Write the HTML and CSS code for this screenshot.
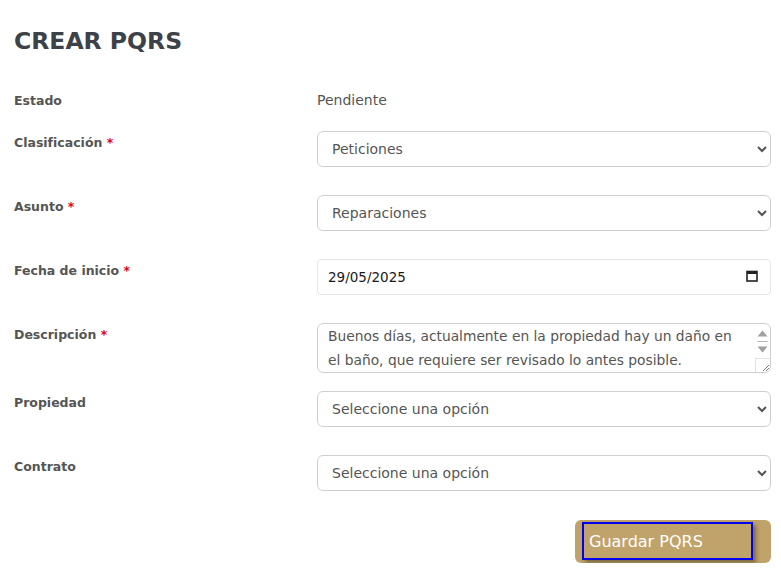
FILE: index.html
```html
<!DOCTYPE html>
<html lang="es">
<head>
    <meta charset="UTF-8">
    <meta name="viewport" content="width=device-width, initial-scale=1.0">
    <title>Crear PQRS</title>
    <link rel="stylesheet" href="styles.css">
</head>
<body>

<div class="container">
    <h2>CREAR PQRS</h2>
    <form id="pqrs-form">
        <div class="row row-static">
            <label>Estado</label>
            <div class="static">Pendiente</div>
        </div>
        <div class="row">
            <label for="clasificacion">Clasificación <span class="req">*</span></label>
            <select id="clasificacion">
                <option>Peticiones</option>
                <option>Quejas</option>
                <option>Reclamos</option>
                <option>Sugerencias</option>
            </select>
        </div>
        <div class="row">
            <label for="asunto">Asunto <span class="req">*</span></label>
            <select id="asunto">
                <option>Reparaciones</option>
                <option>Pagos</option>
                <option>Otros</option>
            </select>
        </div>
        <div class="row">
            <label for="fecha">Fecha de inicio <span class="req">*</span></label>
            <div class="date-field">
                <input type="text" id="fecha" value="29/05/2025">
                <svg class="cal" width="12" height="12" viewBox="0 0 12 12">
                    <rect x="1" y="1.5" width="10" height="9.5" fill="none" stroke="#222" stroke-width="1.6"/>
                    <rect x="1" y="1.5" width="10" height="2.5" fill="#222"/>
                </svg>
            </div>
        </div>
        <div class="row row-text">
            <label for="descripcion">Descripción <span class="req">*</span></label>
            <div class="text-field">
                <textarea id="descripcion">Buenos días, actualmente en la propiedad hay un daño en el baño, que requiere ser revisado lo antes posible.</textarea>
                <div class="fake-scroll">
                    <svg class="arrows" width="15" height="34" viewBox="0 0 15 34">
                        <path d="M2.5 12.5 L7.5 6.5 L12.5 12.5 Z" fill="#a0a0a0"/>
                        <line x1="2.5" y1="17.5" x2="12.5" y2="17.5" stroke="#b5b5b5" stroke-width="1"/>
                        <path d="M2.5 22.5 L12.5 22.5 L7.5 28.5 Z" fill="#a0a0a0"/>
                    </svg>
                    <div class="grip">
                        <svg width="10" height="10" viewBox="0 0 10 10">
                            <line x1="3" y1="9" x2="9" y2="3" stroke="#777" stroke-width="1"/>
                            <line x1="6" y1="9" x2="9" y2="6" stroke="#777" stroke-width="1"/>
                        </svg>
                    </div>
                </div>
            </div>
        </div>
        <div class="row">
            <label for="propiedad">Propiedad</label>
            <select id="propiedad">
                <option>Seleccione una opción</option>
            </select>
        </div>
        <div class="row">
            <label for="contrato">Contrato</label>
            <select id="contrato">
                <option>Seleccione una opción</option>
            </select>
        </div>
        <div class="actions">
            <div class="btn-wrap">
                <button type="button" id="save-btn">Guardar PQRS</button>
            </div>
        </div>
    </form>
</div>

</body>
</html>
```

FILE: styles.css
```css
body {
    font-family: "DejaVu Sans", sans-serif;
    background-color: #ffffff;
    margin: 0;
}
.container {
    padding: 26px 10px 0 14px;
}
h2 {
    margin: 0 0 33px 0;
    font-size: 23.5px;
    line-height: 30px;
    font-weight: bold;
    color: #3d4148;
}
.row {
    display: grid;
    grid-template-columns: 303px 1fr;
    align-items: start;
    margin-bottom: 28px;
}
.row-static {
    margin-bottom: 20px;
}
.row-text {
    margin-bottom: 18px;
}
label {
    font-size: 12.5px;
    line-height: 20px;
    padding-top: 2px;
    font-weight: bold;
    color: #555555;
}
.req {
    color: #e3001b;
}
.static {
    font-size: 14px;
    line-height: 20px;
    padding-top: 1px;
    color: #555555;
}
select {
    width: 100%;
    height: 36px;
    padding: 0 10px 0 10px;
    font-family: "DejaVu Sans", sans-serif;
    font-size: 14px;
    color: #555555;
    background-color: #ffffff;
    border: 1px solid #cfcfcf;
    border-radius: 6px;
}
.date-field {
    display: flex;
    align-items: center;
    height: 36px;
    box-sizing: border-box;
    border: 1px solid #e6e6e6;
    border-radius: 4px;
    padding: 0 12px 0 10px;
}
.date-field input {
    flex: 1;
    border: none;
    outline: none;
    padding: 0;
    font-family: "DejaVu Sans", sans-serif;
    font-size: 13.5px;
    color: #1a1a1a;
}
.cal {
    margin-top: -2px;
}
.text-field {
    position: relative;
    height: 50px;
}
textarea {
    display: block;
    box-sizing: border-box;
    width: 100%;
    height: 50px;
    padding: 0 24px 0 10px;
    font-family: "DejaVu Sans", sans-serif;
    font-size: 13.8px;
    line-height: 24px;
    color: #555555;
    border: 1px solid #cfcfcf;
    border-radius: 6px;
    resize: none;
    overflow: hidden;
}
.fake-scroll {
    position: absolute;
    top: 1px;
    right: 1px;
    bottom: 1px;
    width: 15px;
    display: flex;
    flex-direction: column;
    justify-content: space-between;
}
.arrows {
    display: block;
}
.grip {
    height: 13px;
    border-top: 1px solid #e2e2e2;
    border-left: 1px solid #e2e2e2;
    display: flex;
    justify-content: flex-end;
    align-items: flex-end;
}
.grip svg {
    display: block;
}
.actions {
    display: flex;
    justify-content: flex-end;
    margin-top: 29px;
}
.btn-wrap {
    width: 196px;
    height: 43px;
    box-sizing: border-box;
    padding: 2px 18px 3px 7px;
    background-color: #bfa36a;
    border-radius: 6px;
}
button {
    width: 100%;
    height: 100%;
    padding: 0 0 0 5px;
    text-align: left;
    font-family: "DejaVu Sans", sans-serif;
    font-size: 16px;
    color: #ffffff;
    background-color: #bfa36a;
    border: 2px solid #0000ee;
    box-shadow: 3px 3px 4px rgba(0, 0, 0, 0.35);
    cursor: pointer;
}
```
